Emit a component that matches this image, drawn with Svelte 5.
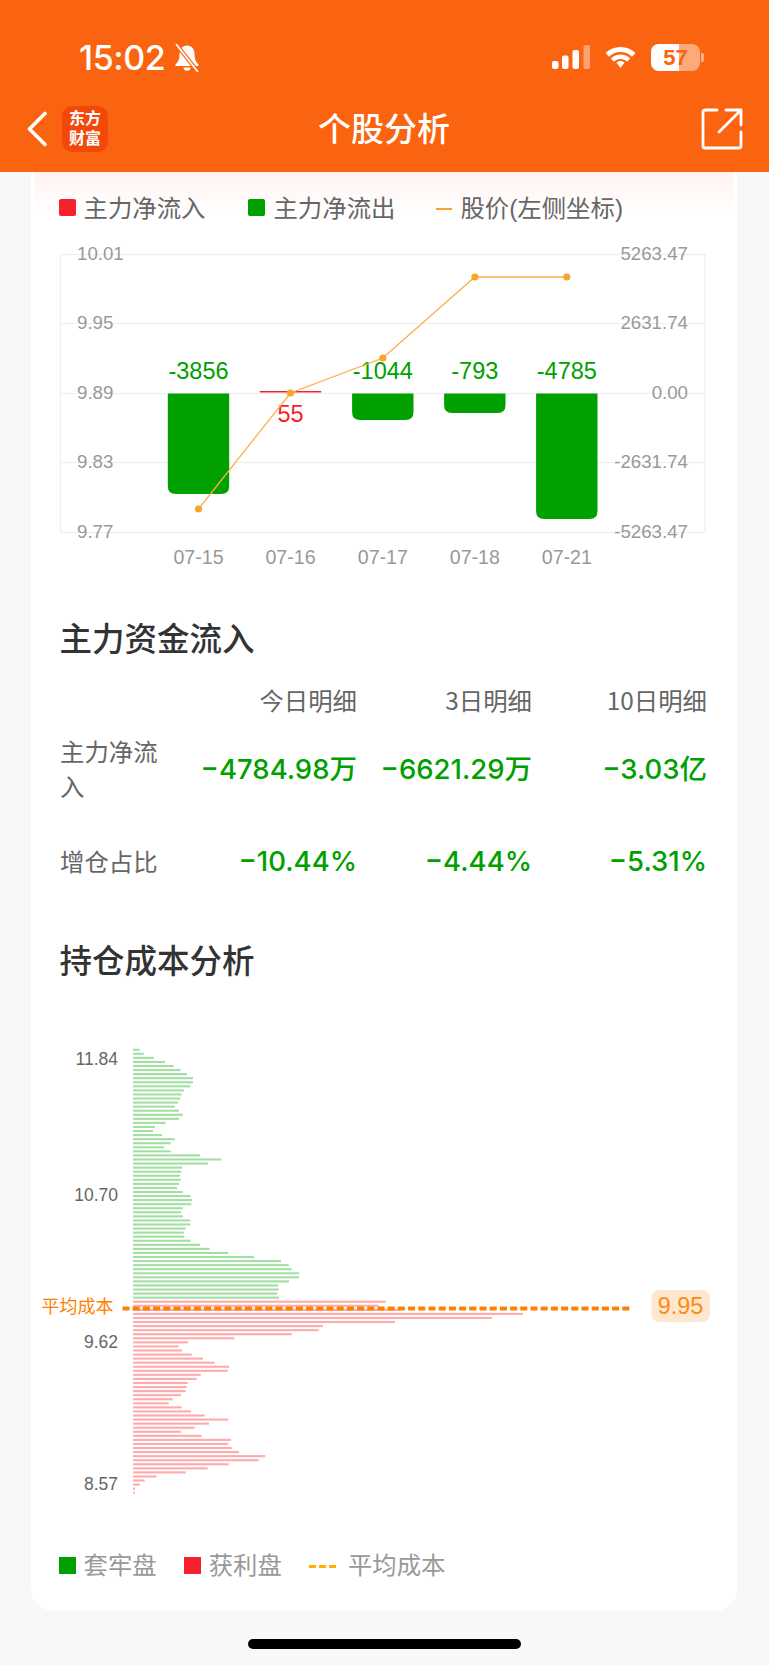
<script lang="ts">
  // bar widths in px, read top to bottom off the cost distribution
  const loss = [6.7,10.7,21,32,40.7,47.7,54,60,60,57.3,51,48.7,47.3,45,41.7,46,49.7,46,32.7,22,20,29,41.7,37.7,31,37.7,67,88.3,75,49,48.3,47,47.7,46,44,49.7,57.7,59,58.3,49.7,48,50,57.3,57.3,52.7,50.7,51.3,57.7,67,76.7,95.3,121,148,155.7,158.7,166.3,166,156,145,145.7,144.3,146];
  const gain = [252.7,245.7,267,390,359,262,190,185.7,158.7,101.3,55,45.3,49,58.7,70,81.7,96,94.7,67.7,63.7,54.7,53.7,52.7,48,39.7,35.7,48.7,58,71.7,95.3,76,61.7,48,68.7,98,95.3,98.7,106,132.3,125.7,95.7,74.7,52.7,23.7,11.7,6.7,2,1.7];
  const costTop = 1049.7 - 1020;
  const pitch = 4.064;

  const gridY = [254.5, 323.5, 393.5, 462.5, 532.5];
  const leftAxis = ["10.01", "9.95", "9.89", "9.83", "9.77"];
  const rightAxis = ["5263.47", "2631.74", "0.00", "-2631.74", "-5263.47"];
  const days = [
    { date: "07-15", x: 198.5, y: 509, value: -3856, end: 494 },
    { date: "07-16", x: 290.5, y: 393, value: 55, end: 0 },
    { date: "07-17", x: 382.8, y: 358, value: -1044, end: 420 },
    { date: "07-18", x: 474.8, y: 277, value: -793, end: 413 },
    { date: "07-21", x: 566.8, y: 277, value: -4785, end: 519 },
  ];
  const price = days.map((d) => `${d.x},${d.y}`).join(" ");

  function barPath(cx: number, end: number) {
    const l = cx - 30.7;
    const r = cx + 30.7;
    return `M${l} 393.5H${r}V${end - 8}Q${r} ${end} ${r - 8} ${end}H${l + 8}Q${l} ${end} ${l} ${end - 8}Z`;
  }

  const rows = [
    { name: "主力净流入", cells: ["−4784.98万", "−6621.29万", "−3.03亿"] },
    { name: "增仓占比", cells: ["−10.44%", "−4.44%", "−5.31%"] },
  ];
</script>

<div class="page">
  <header class="top">
    <div class="status">
      <div class="clock">
        <span>15:02</span>
        <svg width="26" height="28" viewBox="0 0 26 28">
          <path d="M13 1.500c-5 0-7.500 3.800-7.500 8.500 0 4.800-1 7.500-4 10.500v1.500h23v-1.500c-3-3-4-5.700-4-10.500 0-4.700-2.500-8.500-7.500-8.500z" fill="#fff" />
          <path d="M9.500 23.500a3.500 3.300 0 0 0 7 0z" fill="#fff" />
          <path d="M2 0l22 28" stroke="#fa6410" stroke-width="4" />
          <path d="M2 0l22 28" stroke="#fff" stroke-width="1.700" />
        </svg>
      </div>
      <div class="indicators">
        <svg width="38" height="24" viewBox="0 0 38 24">
          <rect x="0" y="16" width="6.500" height="8" rx="2" fill="#fff" />
          <rect x="10" y="10.500" width="6.500" height="13.500" rx="2" fill="#fff" />
          <rect x="20.500" y="5" width="6.500" height="19" rx="2" fill="#fff" />
          <rect x="31.500" y="0" width="6.500" height="24" rx="2" fill="#fff" opacity="0.4" />
        </svg>
        <svg width="31" height="24" viewBox="1 0 31 24">
          <path d="M16.500 7c4.500 0 8.500 1.800 11.500 4.700l3.500-3.600C27.500 4.300 22.300 2 16.500 2S5.500 4.300 1.500 8.100L5 11.700C8 8.800 12 7 16.500 7z" fill="#fff" />
          <path d="M16.500 14c2.600 0 4.900 1 6.600 2.700l3.100-3.200C23.600 11 20.200 9.500 16.500 9.500S9.400 11 6.800 13.500l3.100 3.200C11.600 15 13.900 14 16.500 14z" fill="#fff" />
          <path d="M16.500 16c-1.600 0-3 .600-4.100 1.600l4.100 5.400 4.100-5.400C19.500 16.600 18.100 16 16.500 16z" fill="#fff" />
        </svg>
        <div class="battery">
          <div class="cell"><span class="fill"></span><b>57</b></div>
          <span class="nub"></span>
        </div>
      </div>
    </div>
    <nav class="nav">
      <svg class="back" width="22" height="36" viewBox="0 0 22 36">
        <path d="M19 2.500L3.500 18 19 33.500" fill="none" stroke="#fff" stroke-width="3.600" stroke-linecap="round" stroke-linejoin="round" />
      </svg>
      <div class="logo"><span>东方</span><span>财富</span></div>
      <h1>个股分析</h1>
      <svg class="share" width="42" height="42" viewBox="0 0 42 42">
        <path d="M16 2H4a2 2 0 0 0-2 2v34a2 2 0 0 0 2 2h34a2 2 0 0 0 2-2V24" fill="none" stroke="#fff" stroke-width="2.800" stroke-linecap="round" stroke-linejoin="round" />
        <path d="M18 24L40 2M25 2h15v15" fill="none" stroke="#fff" stroke-width="2.800" stroke-linecap="round" stroke-linejoin="round" />
      </svg>
    </nav>
  </header>

  <main class="card">
    <div class="legend flow">
      <span class="key"><i class="swatch red"></i>主力净流入</span>
      <span class="key"><i class="swatch green"></i>主力净流出</span>
      <span class="key"><i class="dash"></i>股价(左侧坐标)</span>
    </div>

    <svg class="flow-chart" width="706" height="368" viewBox="31 222 706 368">
      <rect x="60.5" y="254.500" width="644.500" height="278" fill="none" stroke="#eeeeee" stroke-width="1.200" />
      {#each gridY as y}
        <line x1="60.500" x2="705" y1={y} y2={y} stroke="#eeeeee" stroke-width="1.200" />
      {/each}
      {#each gridY as y, i}
        <text class="axis" x="77" y={y + 5}>{leftAxis[i]}</text>
        <text class="axis" x="688" y={y + 5} text-anchor="end">{rightAxis[i]}</text>
      {/each}
      {#each days as d}
        {#if d.value < 0}
          <path d={barPath(d.x, d.end)} fill="#00a000" />
          <text class="val" x={d.x} y="379" fill="#00a000" text-anchor="middle">{d.value}</text>
        {:else}
          <rect x={d.x - 30.700} y="391" width="61.400" height="1.500" fill="#f5222d" />
          <text class="val" x={d.x} y="422" fill="#f5222d" text-anchor="middle">{d.value}</text>
        {/if}
        <text class="axis date" x={d.x} y="564" text-anchor="middle">{d.date}</text>
      {/each}
      <polyline points={price} fill="none" stroke="#fbae4a" stroke-width="1.300" />
      {#each days as d}
        <circle cx={d.x} cy={d.y} r="3.600" fill="#fba42c" />
      {/each}
    </svg>

    <h2 class="funds-title">主力资金流入</h2>
    <div class="funds">
      <span></span>
      <span class="head">今日明细</span>
      <span class="head">3日明细</span>
      <span class="head">10日明细</span>
      {#each rows as row}
        <span class="name">{row.name}</span>
        {#each row.cells as cell}
          <span class="num">{cell}</span>
        {/each}
      {/each}
    </div>

    <h2 class="cost-title">持仓成本分析</h2>
    <svg class="cost" width="706" height="520" viewBox="31 1020 706 520">
      <g transform="translate(0 1020)">
        {#each loss as w, i}
          <rect x="133" y={costTop + i * pitch - 1} width={w} height="2.100" fill="#a3dfa3" />
        {/each}
        {#each gain as w, i}
          <rect x="133" y={costTop + (loss.length + i) * pitch - 1} width={w} height="2.100" fill="#ffabab" />
        {/each}
      </g>
      <text class="tick" x="118" y="1065">11.84</text>
      <text class="tick" x="118" y="1201">10.70</text>
      <text class="tick" x="118" y="1348">9.62</text>
      <text class="tick" x="118" y="1490">8.57</text>
      <text class="avg" x="41.500" y="1312.500">平均成本</text>
      <line x1="122.500" x2="632" y1="1308.400" y2="1308.400" stroke="#ff8000" stroke-width="4" stroke-dasharray="7 3.200" />
      <rect x="651.500" y="1290" width="58.500" height="32" rx="8" fill="#ffe6cf" />
      <text class="chip" x="680.500" y="1314.200" text-anchor="middle">9.95</text>
    </svg>

    <div class="legend bottom">
      <span class="key"><i class="swatch green"></i>套牢盘</span>
      <span class="key"><i class="swatch red"></i>获利盘</span>
      <span class="key"><i class="dashes"></i>平均成本</span>
    </div>
  </main>

  <div class="home"></div>
</div>

<style>
  :global(body) {
    margin: 0;
    background: #f8f8fa;
  }
  .page {
    width: 769px;
    height: 1665px;
    overflow: hidden;
    background: #f8f8fa;
    font-family: "Liberation Sans", "Noto Sans CJK SC", sans-serif;
  }
  .top {
    height: 172px;
    background: #fa6410;
    color: #fff;
    box-sizing: border-box;
  }
  .status {
    height: 100px;
    padding: 41px 65px 0 79px;
    box-sizing: border-box;
    display: flex;
    justify-content: space-between;
    align-items: flex-start;
  }
  .clock {
    display: flex;
    align-items: center;
    gap: 9px;
    height: 34px;
    font: 500 34px/34px Inter, "Liberation Sans", sans-serif;
    letter-spacing: -0.4px;
  }
  .indicators {
    display: flex;
    align-items: center;
    gap: 15px;
    height: 32px;
  }
  .battery {
    display: flex;
    align-items: center;
    gap: 1px;
  }
  .cell {
    position: relative;
    width: 49px;
    height: 27px;
    border-radius: 8px;
    background: rgba(255, 255, 255, 0.45);
    overflow: hidden;
    text-align: center;
    font: 700 22px/27px "Liberation Sans", sans-serif;
    color: #fa6410;
  }
  .cell .fill {
    position: absolute;
    left: 0;
    top: 0;
    bottom: 0;
    width: 28px;
    background: #fff;
  }
  .cell b {
    position: relative;
  }
  .nub {
    width: 3px;
    height: 9px;
    border-radius: 0 2px 2px 0;
    background: rgba(255, 255, 255, 0.5);
  }
  .nav {
    display: flex;
    align-items: center;
    height: 46px;
    margin-top: 6px;
    padding: 0 26px;
  }
  .logo {
    width: 46px;
    height: 46px;
    margin-left: 14px;
    border-radius: 10px;
    background: #f4480a;
    display: flex;
    flex-direction: column;
    align-items: center;
    justify-content: center;
    font: 700 16px/20px "Liberation Sans", "Noto Sans CJK SC", sans-serif;
  }
  .nav h1 {
    flex: 1;
    margin: 0;
    text-align: center;
    font: 500 33px/42px "Noto Sans CJK SC", sans-serif;
    padding: 0 41px 4px 0;
    box-sizing: border-box;
  }
  .card {
    width: 706px;
    height: 1439px;
    margin-left: 31px;
    background: #fff;
    border-radius: 0 0 22px 22px;
  }
  .legend {
    display: flex;
    font-size: 24.400px;
    line-height: 34px;
  }
  .legend.flow {
    height: 50px;
    box-sizing: border-box;
    padding: 23px 0 0 27.500px;
    gap: 43px;
    color: #666;
    background: linear-gradient(#fff2ee, #fff 40px);
    background-size: calc(100% - 8px) 100%;
    background-repeat: no-repeat;
    background-position: 4px 0;
  }
  .key {
    display: inline-flex;
    align-items: center;
    white-space: nowrap;
  }
  .swatch {
    width: 17px;
    height: 17px;
    margin: -2px 8px 0 0;
    border-radius: 2px;
  }
  .red {
    background: #f5222d;
  }
  .green {
    background: #00a000;
  }
  .dash {
    width: 16px;
    height: 2px;
    margin: 0 8px 0 -2px;
    background: #fba42c;
  }
  .dashes {
    width: 27px;
    height: 3px;
    margin-right: 12px;
    background: repeating-linear-gradient(90deg, #ffb000 0 7px, transparent 7px 10px);
  }
  .flow-chart,
  .cost {
    display: block;
  }
  .cost {
    margin-top: 38px;
  }
  .axis {
    font-size: 18.700px;
    fill: #999;
  }
  .date {
    font-size: 19.600px;
  }
  .val {
    font-size: 23.500px;
  }
  h2 {
    margin: 0;
    padding-left: 28.500px;
    font: 500 32.500px/46px "Noto Sans CJK SC", sans-serif;
    color: #333;
  }
  .funds-title {
    margin-top: 24px;
  }
  .funds {
    margin: 23px 0 0 29px;
    width: 647px;
    display: grid;
    grid-template-columns: 122px 175px 175px 175px;
    align-items: center;
    row-gap: 40px;
  }
  .head {
    text-align: right;
    font: 24.400px/34px "Noto Sans CJK SC", sans-serif;
    color: #666;
  }
  .funds .head {
    margin-bottom: -24px;
  }
  .name {
    padding-right: 8px;
    font: 24.400px/35px "Noto Sans CJK SC", sans-serif;
    color: #666;
  }
  .num {
    padding-top: 2px;
    text-align: right;
    font: 500 27.500px/33px Inter, "Noto Sans CJK SC", sans-serif;
    color: #00a000;
    white-space: nowrap;
  }
  .cost-title {
    margin-top: 58px;
  }
  .tick {
    font-size: 17.500px;
    fill: #666;
    text-anchor: end;
  }
  .avg {
    font: 18px "Noto Sans CJK SC", sans-serif;
    fill: #ff8000;
  }
  .chip {
    font-size: 23.500px;
    fill: #ff8a10;
  }
  .legend.bottom {
    padding: 9px 0 0 27.500px;
    gap: 27px;
    color: #999;
  }
  .legend.bottom .swatch {
    border-radius: 0;
  }
  .home {
    width: 273px;
    height: 10px;
    margin: 28px 0 0 247.500px;
    border-radius: 5px;
    background: #000;
  }
</style>
